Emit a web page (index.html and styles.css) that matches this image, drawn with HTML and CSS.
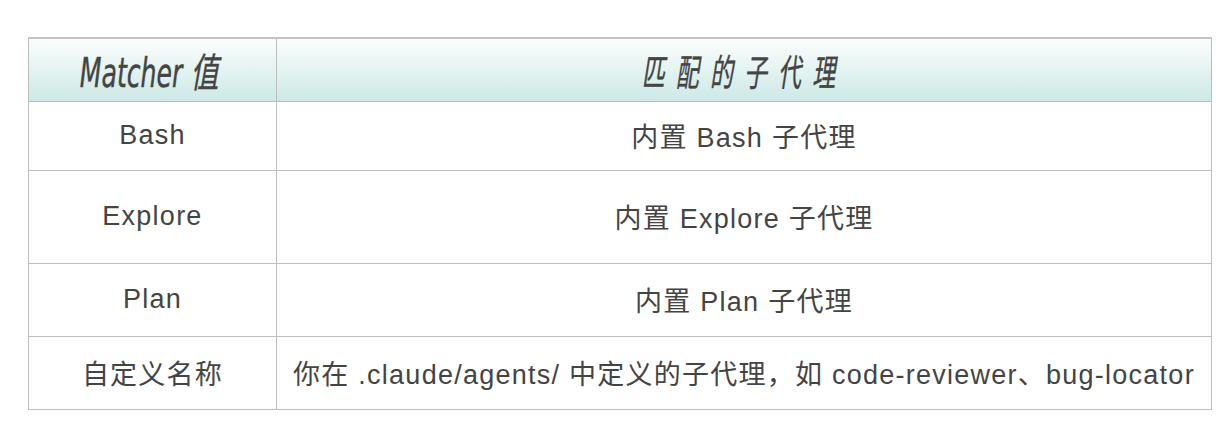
FILE: index.html
```html
<!DOCTYPE html>
<html lang="zh">
<head>
<meta charset="utf-8">
<link rel="stylesheet" href="styles.css">
</head>
<body>
<div class="wrap">
  <table class="grid">
    <thead>
      <tr>
        <th class="c1"><span class="hd hd-a">Matcher 值</span></th>
        <th class="c2"><span class="hd hd-b">匹配的子代理</span></th>
      </tr>
    </thead>
    <tbody>
      <tr class="r1"><td>Bash</td><td>内置 Bash 子代理</td></tr>
      <tr class="r2"><td>Explore</td><td>内置 Explore 子代理</td></tr>
      <tr class="r3"><td>Plan</td><td>内置 Plan 子代理</td></tr>
      <tr class="r4"><td>自定义名称</td><td>你在 .claude/agents/ 中定义的子代理，如 code-reviewer、bug-locator</td></tr>
    </tbody>
  </table>
</div>
</body>
</html>
```
FILE: styles.css
```css
html, body {
  margin: 0;
  padding: 0;
  background: #ffffff;
}
.wrap {
  padding: 37px 0 0 28px;
}
.grid {
  border-collapse: collapse;
  width: 1184px;
  table-layout: fixed;
  font-family: "Liberation Sans", "Noto Sans CJK SC", sans-serif;
  color: #444444;
}
.grid th, .grid td {
  border: 1px solid #bdbdbd;
  text-align: center;
  vertical-align: middle;
  padding: 0;
}
.grid thead tr {
  height: 63px;
  background: linear-gradient(#fbfefd, #cde9e6);
}
.grid thead th {
  border-top: 2px solid #c4c4c4;
  font-weight: normal;
}
.c1 { width: 247px; }
.hd {
  display: inline-block;
  font-family: "DejaVu Sans Condensed", "Noto Sans CJK SC", sans-serif;
  font-style: italic;
  color: #444444;
  transform-origin: center;
}
.hd-a {
  font-size: 40px;
  transform: scaleX(0.7);
  margin-right: 6px;
  -webkit-text-stroke: 0.4px #444444;
}
.hd-b {
  font-size: 37px;
  letter-spacing: 18px;
  margin-right: 0;
  transform: scaleX(0.62);
  -webkit-text-stroke: 0.4px #444444;
}
.grid td {
  font-size: 27px;
  letter-spacing: 1.25px;
}
.r1 { height: 69px; }
.r2 { height: 93px; }
.r3 { height: 73px; }
.r4 { height: 73px; }
```
